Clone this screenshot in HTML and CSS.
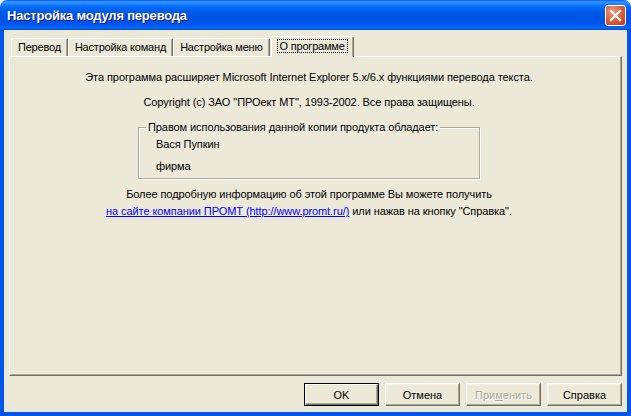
FILE: index.html
```html
<!DOCTYPE html>
<html lang="ru">
<head>
<meta charset="utf-8">
<title>Настройка модуля перевода</title>
<link rel="stylesheet" href="styles.css">
</head>
<body>
<div class="window">
  <div class="titlebar">
    <span class="title">Настройка модуля перевода</span>
    <span class="close" aria-label="Закрыть">
      <svg width="13" height="13" viewBox="0 0 13 13"><path d="M2 2 L11 11 M11 2 L2 11" stroke="#fff" stroke-width="2.2" stroke-linecap="square"/></svg>
    </span>
  </div>
  <div class="frame">
    <div class="client">
      <div class="tabs">
        <div class="tab">Перевод</div>
        <div class="tab">Настройка команд</div>
        <div class="tab">Настройка меню</div>
        <div class="tab selected"><span class="focus">О программе</span></div>
      </div>
      <div class="panel">
        <p class="line first">Эта программа расширяет Microsoft Internet Explorer 5.x/6.x функциями перевода текста.</p>
        <p class="line second">Copyright (c) ЗАО "ПРОект МТ", 1993-2002. Все права защищены.</p>
        <fieldset class="group">
          <legend>Правом использования данной копии продукта обладает:</legend>
          <div class="owner">Вася Пупкин</div>
          <div class="owner company">фирма</div>
        </fieldset>
        <p class="line more">Более подробную информацию об этой программе Вы можете получить</p>
        <p class="line link-line"><a href="#" class="link">на сайте компании ПРОМТ (http://www.promt.ru/)</a> или нажав на кнопку "Справка".</p>
      </div>
      <div class="buttons">
        <button class="btn default">OK</button>
        <button class="btn">Отмена</button>
        <button class="btn disabled">При<u>м</u>енить</button>
        <button class="btn">Справка</button>
      </div>
    </div>
  </div>
</div>
</body>
</html>
```
FILE: styles.css
```css
html, body {
  margin: 0;
  padding: 0;
  background: #ffffff;
}
body {
  width: 631px;
  height: 416px;
  overflow: hidden;
  font-family: "Liberation Sans", Arial, sans-serif;
  font-size: 11px;
  color: #000;
}
.window {
  width: 631px;
  height: 416px;
  display: flex;
  flex-direction: column;
  box-sizing: border-box;
}
.titlebar {
  height: 30px;
  flex: none;
  display: flex;
  align-items: center;
  padding: 0 5px 0 7px;
  border-radius: 7px 7px 0 0;
  background: linear-gradient(#0058EE 0%, #3A93FF 6%, #288EFF 10%, #127DFF 16%, #036FFC 22%, #0262EE 30%, #0057E5 45%, #0054E3 60%, #0055EB 80%, #005BF5 88%, #026AFE 92%, #0062EF 96%, #0043CF 100%);
}
.title {
  flex: 1;
  color: #fff;
  font-family: "Liberation Sans", Arial, sans-serif;
  font-weight: bold;
  font-size: 13px;
  letter-spacing: -0.2px;
  text-shadow: 1px 1px 0 #0F1089;
  padding-top: 1px;
}
.close {
  width: 19px;
  height: 19px;
  border: 1px solid #fff;
  border-radius: 3px;
  display: flex;
  align-items: center;
  justify-content: center;
  background: radial-gradient(circle at 35% 30%, #F0A080 0%, #E3714F 35%, #CC4A26 75%, #B83A18 100%);
  margin-top: 1px;
}
.frame {
  flex: 1;
  display: flex;
  border: solid #0055EA;
  border-width: 0 4px 4px 4px;
  box-shadow: inset 0 -1px 0 #0034B8;
}
.client {
  flex: 1;
  display: flex;
  flex-direction: column;
  background: #ECE9D8;
  padding: 6px 5px 0 5px;
}
.tabs {
  display: flex;
  align-items: flex-end;
  padding-left: 2px;
  height: 20px;
  position: relative;
  z-index: 1;
}
.tab {
  height: 17px;
  line-height: 16px;
  padding: 0 6px;
  letter-spacing: -0.2px;
  border: 1px solid;
  border-color: #fff #716F64 transparent #fff;
  border-bottom: none;
  border-radius: 2px 2px 0 0;
  box-shadow: inset -1px 0 0 #ACA899;
  white-space: nowrap;
}
.tab.selected {
  height: 20px;
  margin: 0 -2px 0 1px;
  padding: 0 6px 0 6px;
  position: relative;
  top: 1px;
  background: #ECE9D8;
  line-height: 18px;
}
.focus {
  outline: 1px dotted #000;
  outline-offset: 0;
  padding: 0 2px;
}
.panel {
  flex: none;
  border: 1px solid;
  border-color: #fff #716F64 #716F64 #fff;
  box-shadow: inset -1px -1px 0 #ACA899;
  display: flex;
  flex-direction: column;
  align-items: center;
  padding: 14px 15px 0 2px;
  box-sizing: border-box;
  height: 320px;
  letter-spacing: -0.08px;
}
.line {
  margin: 0;
  line-height: 13px;
  white-space: nowrap;
}
.second {
  margin-top: 12px;
}
.group {
  margin: 12px 0 0 0;
  width: 342px;
  box-sizing: border-box;
  padding: 4px 8px 5px 7px;
  border: 1px solid #ACA899;
  box-shadow: 1px 1px 0 #fff, inset 1px 1px 0 #fff;
  min-width: 0;
}
.group legend {
  padding: 0 2px;
  line-height: 13px;
}
.owner {
  line-height: 13px;
  padding-left: 10px;
}
.company {
  margin-top: 9px;
}
.more {
  margin-top: 9px;
}
.link-line {
  margin-top: 4px;
}
.link {
  color: #0000FF;
  text-decoration: underline;
}
.buttons {
  display: flex;
  justify-content: flex-end;
  gap: 6px;
  margin-top: 7px;
}
.btn {
  width: 75px;
  height: 23px;
  box-sizing: border-box;
  font-family: "Liberation Sans", Arial, sans-serif;
  font-size: 11px;
  color: #000;
  background: #ECE9D8;
  border: 1px solid;
  border-color: #fff #716F64 #716F64 #fff;
  box-shadow: inset -1px -1px 0 #ACA899, inset 1px 1px 0 #F1EFE2;
  padding: 0;
  border-radius: 0;
}
.btn.default {
  border: 1px solid #000;
  box-shadow: inset 1px 1px 0 #fff, inset -1px -1px 0 #716F64, inset -2px -2px 0 #ACA899;
}
.btn.disabled {
  color: #ACA899;
  text-shadow: 1px 1px 0 #fff;
}
```
